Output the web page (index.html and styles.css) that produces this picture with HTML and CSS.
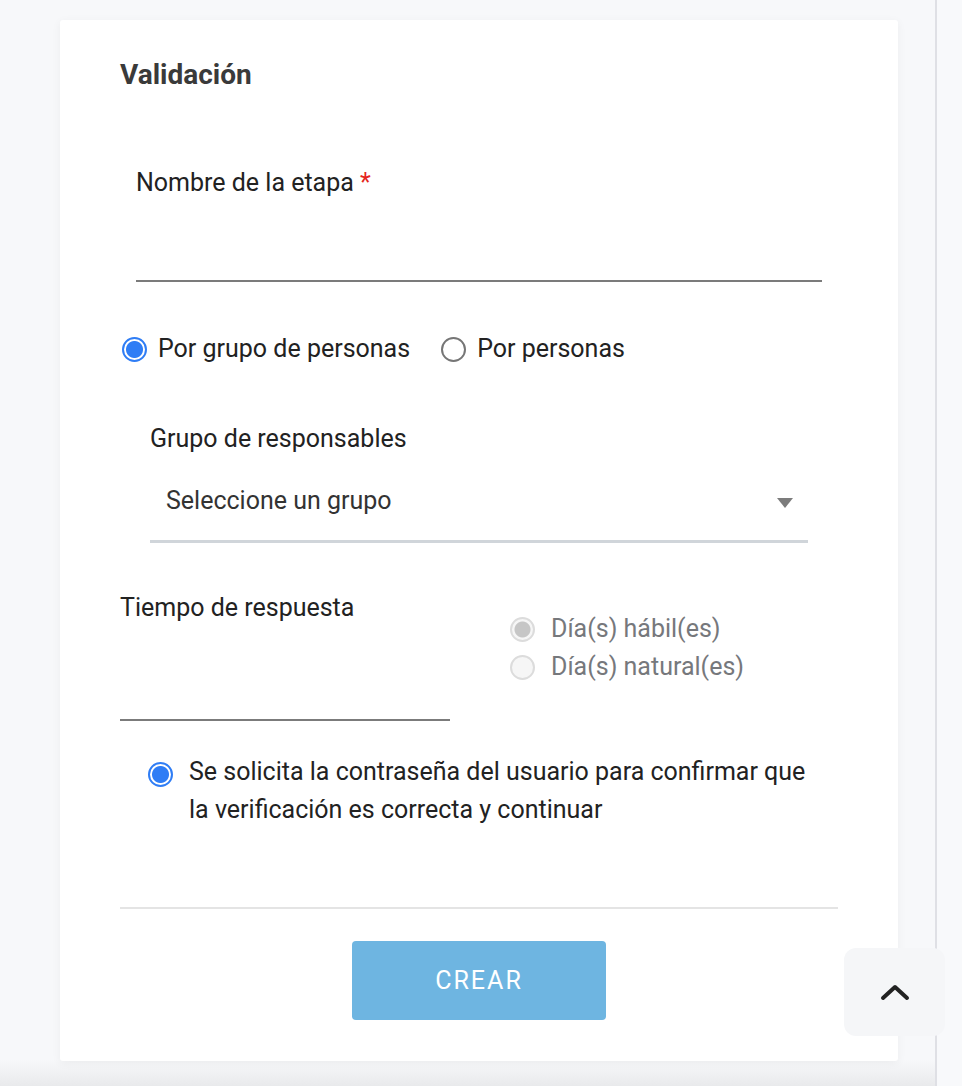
FILE: index.html
```html
<!DOCTYPE html>
<html lang="es">
<head>
<meta charset="utf-8">
<title>Validación</title>
<link rel="stylesheet" href="styles.css">
</head>
<body>
<div class="layout">
  <main class="main">
    <section class="card">
      <h2 class="title">Validación</h2>

      <div class="field field-name">
        <label class="label">Nombre de la etapa <span class="req">*</span></label>
        <div class="line-input"></div>
      </div>

      <div class="radio-row">
        <label class="radio"><span class="dot checked"></span><span>Por grupo de personas</span></label>
        <label class="radio"><span class="dot"></span><span>Por personas</span></label>
      </div>

      <div class="group-field">
        <div class="label">Grupo de responsables</div>
        <div class="select">
          <span>Seleccione un grupo</span>
          <span class="caret"></span>
        </div>
      </div>

      <div class="time-row">
        <div class="time-field">
          <div class="label">Tiempo de respuesta</div>
          <div class="line-input short"></div>
        </div>
        <div class="time-options">
          <label class="radio disabled"><span class="dot dis-checked"></span><span>Día(s) hábil(es)</span></label>
          <label class="radio disabled"><span class="dot dis"></span><span>Día(s) natural(es)</span></label>
        </div>
      </div>

      <label class="confirm">
        <span class="dot checked"></span>
        <span class="confirm-text">Se solicita la contraseña del usuario para confirmar que la verificación es correcta y continuar</span>
      </label>

      <hr class="sep">

      <div class="actions">
        <button class="btn">CREAR</button>
      </div>
    </section>
  </main>
  <aside class="gutter"></aside>
</div>
<button class="to-top" aria-label="Subir">
  <svg width="32" height="22" viewBox="0 0 32 22"><path d="M4 17 L16 6 L28 17" fill="none" stroke="#222" stroke-width="4" stroke-linecap="round" stroke-linejoin="round"/></svg>
</button>
</body>
</html>
```

FILE: styles.css
```css
html, body {
  margin: 0;
  padding: 0;
  height: 100%;
}
body {
  background: #f7f8fa;
  font-family: Roboto, "Liberation Sans", sans-serif;
  color: #222;
  overflow: hidden;
}
.layout {
  display: flex;
  min-height: 100%;
  background: linear-gradient(to bottom, #f7f8fa 0, #f7f8fa 1060px, #e9eaec 1086px);
}
.main {
  width: 935px;
  padding-top: 20px;
  box-sizing: border-box;
}
.gutter {
  flex: 1;
  border-left: 2px solid #dfe0e5;
  background: #f8f9fb;
}
.card {
  margin-left: 60px;
  width: 838px;
  height: 1041px;
  box-sizing: border-box;
  background: #fff;
  border-radius: 3px;
  box-shadow: 0 2px 10px rgba(0,0,0,0.05);
  padding: 33px 60px 0 60px;
}
.title {
  margin: 0;
  font-size: 28px;
  font-weight: 700;
  line-height: 44px;
  color: #3a3a3a;
}
.field-name {
  margin: 71px 16px 0 16px;
}
.label {
  display: block;
  font-size: 25px;
  line-height: 30px;
  color: #222;
}
.req {
  color: #e52420;
}
.line-input {
  height: 82px;
  border-bottom: 2px solid #7b7b7b;
}
.line-input.short {
  width: 330px;
  height: 96px;
}
.radio-row {
  display: flex;
  gap: 31px;
  margin-top: 52px;
  padding-left: 2px;
}
.radio {
  display: flex;
  align-items: center;
  gap: 11px;
  font-size: 25px;
  line-height: 30px;
  color: #222;
}
.dot {
  width: 21px;
  height: 21px;
  border: 2px solid #767676;
  border-radius: 50%;
  box-sizing: content-box;
  flex: none;
  background: #fff;
}
.dot.checked {
  border-color: #2f7df5;
  background: radial-gradient(circle, #2f7df5 0 8px, #fff 9px);
}
.dot.dis {
  border-color: #dcdcdc;
  background: #f6f6f6;
}
.dot.dis-checked {
  border-color: #dcdcdc;
  background: radial-gradient(circle, #c6c6c6 0 7.5px, #f6f6f6 8.5px);
}
.radio.disabled {
  color: #76787c;
  line-height: 38px;
  gap: 16px;
}
.group-field {
  margin: 60px 30px 0 30px;
}
.select {
  display: flex;
  justify-content: space-between;
  align-items: center;
  line-height: 30px;
  padding: 32px 15px 24px 16px;
  border-bottom: 3px solid #d0d5da;
  font-size: 25px;
  color: #333;
}
.caret {
  width: 0;
  height: 0;
  border-left: 8px solid transparent;
  border-right: 8px solid transparent;
  border-top: 10px solid #7c7c7c;
  margin-top: 4px;
}
.time-row {
  display: flex;
  margin-top: 50px;
}
.time-field {
  width: 330px;
}
.time-options {
  margin-left: 60px;
  margin-top: 17px;
  display: flex;
  flex-direction: column;
}
.confirm {
  display: flex;
  align-items: flex-start;
  gap: 16px;
  margin: 32px 0 0 28px;
  font-size: 25px;
  line-height: 38px;
  color: #222;
}
.confirm .dot {
  margin-top: 9px;
}
.confirm-text {
  width: 630px;
}
.sep {
  margin: 78px 0 0 0;
  border: 0;
  border-top: 2px solid #e4e4e4;
}
.actions {
  display: flex;
  justify-content: center;
  margin-top: 32px;
}
.btn {
  width: 254px;
  height: 79px;
  border: 0;
  border-radius: 4px;
  background: #6eb5e1;
  color: #fff;
  font-family: inherit;
  font-size: 25px;
  letter-spacing: 2px;
}
.to-top {
  position: fixed;
  right: 17px;
  bottom: 50px;
  width: 101px;
  height: 88px;
  border: 0;
  border-radius: 12px;
  background: #f5f6f8;
  display: flex;
  align-items: center;
  justify-content: center;
  padding: 0;
}
```
